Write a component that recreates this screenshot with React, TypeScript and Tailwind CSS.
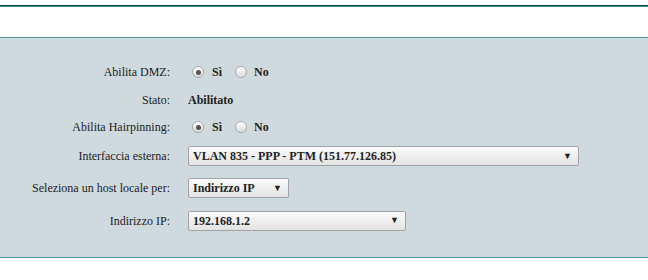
const serif = { fontFamily: '"Liberation Serif", "Times New Roman", serif' };

function Radio({ checked }: { checked?: boolean }) {
  return (
    <span className="flex h-[12px] w-[12px] items-center justify-center rounded-full border border-[#a9a9a9] bg-gradient-to-b from-[#ffffff] to-[#dcdcdc]">
      {checked && <span className="h-[5px] w-[5px] rounded-full bg-[#555]" />}
    </span>
  );
}

function RadioPair() {
  return (
    <div className="ml-[4px] flex items-center text-[12px] font-bold text-[#222]">
      <Radio checked />
      <span className="ml-[8px]">Sì</span>
      <span className="ml-[13px]">
        <Radio />
      </span>
      <span className="ml-[7px]">No</span>
    </div>
  );
}

function Select({ value, width }: { value: string; width: string }) {
  return (
    <div
      className={`flex h-[20px] items-center justify-between rounded-[2px] border border-[#a3a3a3] bg-gradient-to-b from-[#fbfbfb] to-[#e3e3e3] pl-[4px] pr-[6px] text-[12px] font-bold text-[#222] ${width}`}
    >
      <span>{value}</span>
      <span className="text-[9px] leading-none text-[#222]">▼</span>
    </div>
  );
}

function Row({
  label,
  h,
  children,
}: {
  label: string;
  h: string;
  children: React.ReactNode;
}) {
  return (
    <div className={`flex items-center ${h}`}>
      <div className="w-[171px] shrink-0 pr-[1px] text-right text-[12px] text-[#222]">
        {label}
      </div>
      <div className="ml-[17px] flex items-center">{children}</div>
    </div>
  );
}

export default function App() {
  return (
    <div className="h-[280px] w-[648px] bg-white" style={serif}>
      <div className="h-[5px]" />
      <div className="h-[1px] bg-[#20424a]" />
      <div className="h-[1px] bg-[#3a8e9b]" />
      <div className="h-[30px]" />
      <div className="border-y border-[#4b939d] bg-[#cfdadf] pb-[21px] pt-[20px]">
        <Row label="Abilita DMZ:" h="h-[28px]">
          <RadioPair />
        </Row>
        <Row label="Stato:" h="h-[27px]">
          <span className="text-[12px] font-bold text-[#222]">Abilitato</span>
        </Row>
        <Row label="Abilita Hairpinning:" h="h-[28px]">
          <RadioPair />
        </Row>
        <Row label="Interfaccia esterna:" h="h-[30px]">
          <Select value="VLAN 835 - PPP - PTM (151.77.126.85)" width="w-[391px]" />
        </Row>
        <Row label="Seleziona un host locale per:" h="h-[34px]">
          <Select value="Indirizzo IP" width="w-[101px]" />
        </Row>
        <Row label="Indirizzo IP:" h="h-[31px]">
          <Select value="192.168.1.2" width="w-[218px]" />
        </Row>
      </div>
    </div>
  );
}
